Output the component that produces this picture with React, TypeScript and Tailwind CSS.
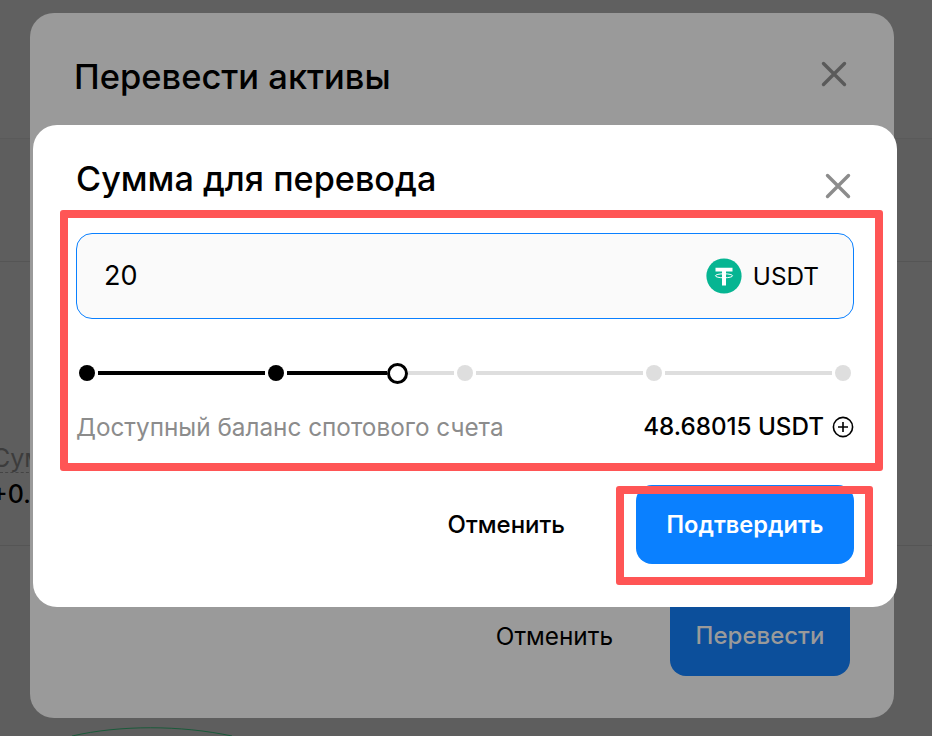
const FONT = "font-['Inter','Noto_Sans',sans-serif]"

function CloseIcon({ color }: { color: string }) {
  return (
    <svg width="26" height="26" viewBox="0 0 26 26" fill="none" stroke={color} strokeWidth="3.4" strokeLinecap="round">
      <path d="M2.5 2.5 L23.5 23.5 M23.5 2.5 L2.5 23.5" />
    </svg>
  )
}

function TetherIcon() {
  return (
    <svg width="36" height="36" viewBox="0 0 36 36">
      <circle cx="18" cy="18" r="17.6" fill="#06b592" />
      <path d="M9.5 9.8 H26.5 V13.4 H20 V16 H16 V13.4 H9.5 Z" fill="#fff" />
      <rect x="16" y="16" width="4" height="11.5" fill="#fff" />
      <ellipse cx="18" cy="17.8" rx="8.6" ry="2" fill="none" stroke="#fff" strokeWidth="1" />
    </svg>
  )
}

function SliderDot({ active }: { active: boolean }) {
  return <span className={active ? 'size-4 shrink-0 rounded-full bg-black' : 'size-4 shrink-0 rounded-full bg-[#dedede]'} />
}

function SliderLine({ active, width }: { active: boolean; width: string }) {
  return <span className={`${width} h-1 shrink-0 ${active ? 'bg-black' : 'bg-[#dedede]'}`} />
}

function AmountDialog() {
  return (
    <div className="absolute left-[33px] top-[125px] flex h-[482px] w-[864px] flex-col rounded-[24px] bg-white px-[43px]">
      <div className="flex h-[108px] justify-between">
        <h2 className="mt-[33px] text-[34.2px] leading-[42px] font-medium text-black">Сумма для перевода</h2>
        <div className="mt-[48px] mr-[3px]">
          <CloseIcon color="#8c8c8c" />
        </div>
      </div>

      <div className="flex h-[86px] items-center justify-between rounded-[16px] border border-[#0a80ff] bg-[#fafafa] pr-[34px] pl-[27px]">
        <span className="text-[27px] text-black">20</span>
        <div className="flex items-center gap-[11px]">
          <TetherIcon />
          <span className="text-[24.3px] text-black">USDT</span>
        </div>
      </div>

      <div className="mt-[44px] flex h-5 items-center pl-[3px]">
        <SliderDot active />
        <span className="w-[3px] shrink-0" />
        <SliderLine active width="w-[167px]" />
        <span className="w-[3px] shrink-0" />
        <SliderDot active />
        <span className="w-[3px] shrink-0" />
        <SliderLine active width="w-[100px]" />
        <span className="size-[21px] shrink-0 rounded-full border-[3.5px] border-black bg-white" />
        <SliderLine active={false} width="w-[46px]" />
        <span className="w-[3px] shrink-0" />
        <SliderDot active={false} />
        <span className="w-[3px] shrink-0" />
        <SliderLine active={false} width="w-[167px]" />
        <span className="w-[3px] shrink-0" />
        <SliderDot active={false} />
        <span className="w-[3px] shrink-0" />
        <SliderLine active={false} width="w-[167px]" />
        <span className="w-[3px] shrink-0" />
        <SliderDot active={false} />
      </div>

      <div className="mt-[27px] flex h-[34px] items-center justify-between">
        <span className="text-[24.3px] text-[#8c8c8c]">Доступный баланс спотового счета</span>
        <div className="flex items-center gap-[8px]">
          <span className="text-[24.2px] font-medium text-black">48.68015 USDT</span>
          <svg width="22" height="22" viewBox="0 0 22 22" fill="none" stroke="#000" strokeWidth="1.6">
            <circle cx="11" cy="11" r="9.6" />
            <path d="M11 6 V16 M6 11 H16" />
          </svg>
        </div>
      </div>

      <div className="mt-[41px] flex items-center justify-end">
        <span className="text-[24px] font-medium text-black">Отменить</span>
        <button className="ml-[71px] h-[79px] w-[218px] rounded-[16px] bg-[#0a80ff] text-[23.6px] font-semibold text-white">
          Подтвердить
        </button>
      </div>
    </div>
  )
}

export default function App() {
  return (
    <div className={`relative h-[736px] w-[932px] overflow-hidden bg-[#5e5e5e] ${FONT}`}>
      {/* page behind the dialogs */}
      <div className="h-[139px] border-b border-[#5a5a5a] bg-[#606060]" />
      <div className="h-[123px] border-b border-[#555555]" />
      <div className="h-[284px] border-b border-[#555555] pt-[182px]">
        <div className="w-[60px] overflow-hidden border-b border-dashed border-[#444444] text-[25px] leading-[28px] text-[#3c3c3c]">
          <span className="-ml-[8px] block whitespace-nowrap">Сумма</span>
        </div>
        <div className="-ml-[9px] mt-[7px] text-[25px] leading-[28px] font-medium text-black">+0.5</div>
      </div>
      <svg className="absolute bottom-0 left-[60px]" width="190" height="12" viewBox="0 0 190 12" fill="none">
        <path d="M12 12 C60 1 120 1 172 12" stroke="#1a5a3a" strokeWidth="1" />
      </svg>

      {/* transfer dialog */}
      <div className="absolute left-[30px] top-[13px] flex h-[705px] w-[864px] flex-col rounded-[24px] bg-[#9a9a9a] pr-[44px] pl-[44px]">
        <div className="flex h-[120px] justify-between">
          <h2 className="mt-[41px] text-[34.5px] leading-[46px] font-medium text-black">Перевести активы</h2>
          <div className="mt-[48px] mr-[3px]">
            <CloseIcon color="#5a5a5a" />
          </div>
        </div>
        <div className="mt-auto mb-[42px] flex items-center justify-end">
          <span className="mt-[10px] text-[24.3px] text-black">Отменить</span>
          <button className="ml-[57px] h-[90px] w-[180px] rounded-[16px] bg-[#0c4f9b] pt-[10px] text-[24px] font-medium text-[#9a9a9a]">
            Перевести
          </button>
        </div>
      </div>

      <AmountDialog />

      {/* red annotation frames */}
      <div className="absolute left-[60px] top-[210px] h-[261px] w-[823px] rounded-[3px] border-[8px] border-[#ff5555]" />
      <div className="absolute left-[616px] top-[486px] h-[99px] w-[257px] rounded-[3px] border-[8px] border-[#ff5555]" />
    </div>
  )
}
